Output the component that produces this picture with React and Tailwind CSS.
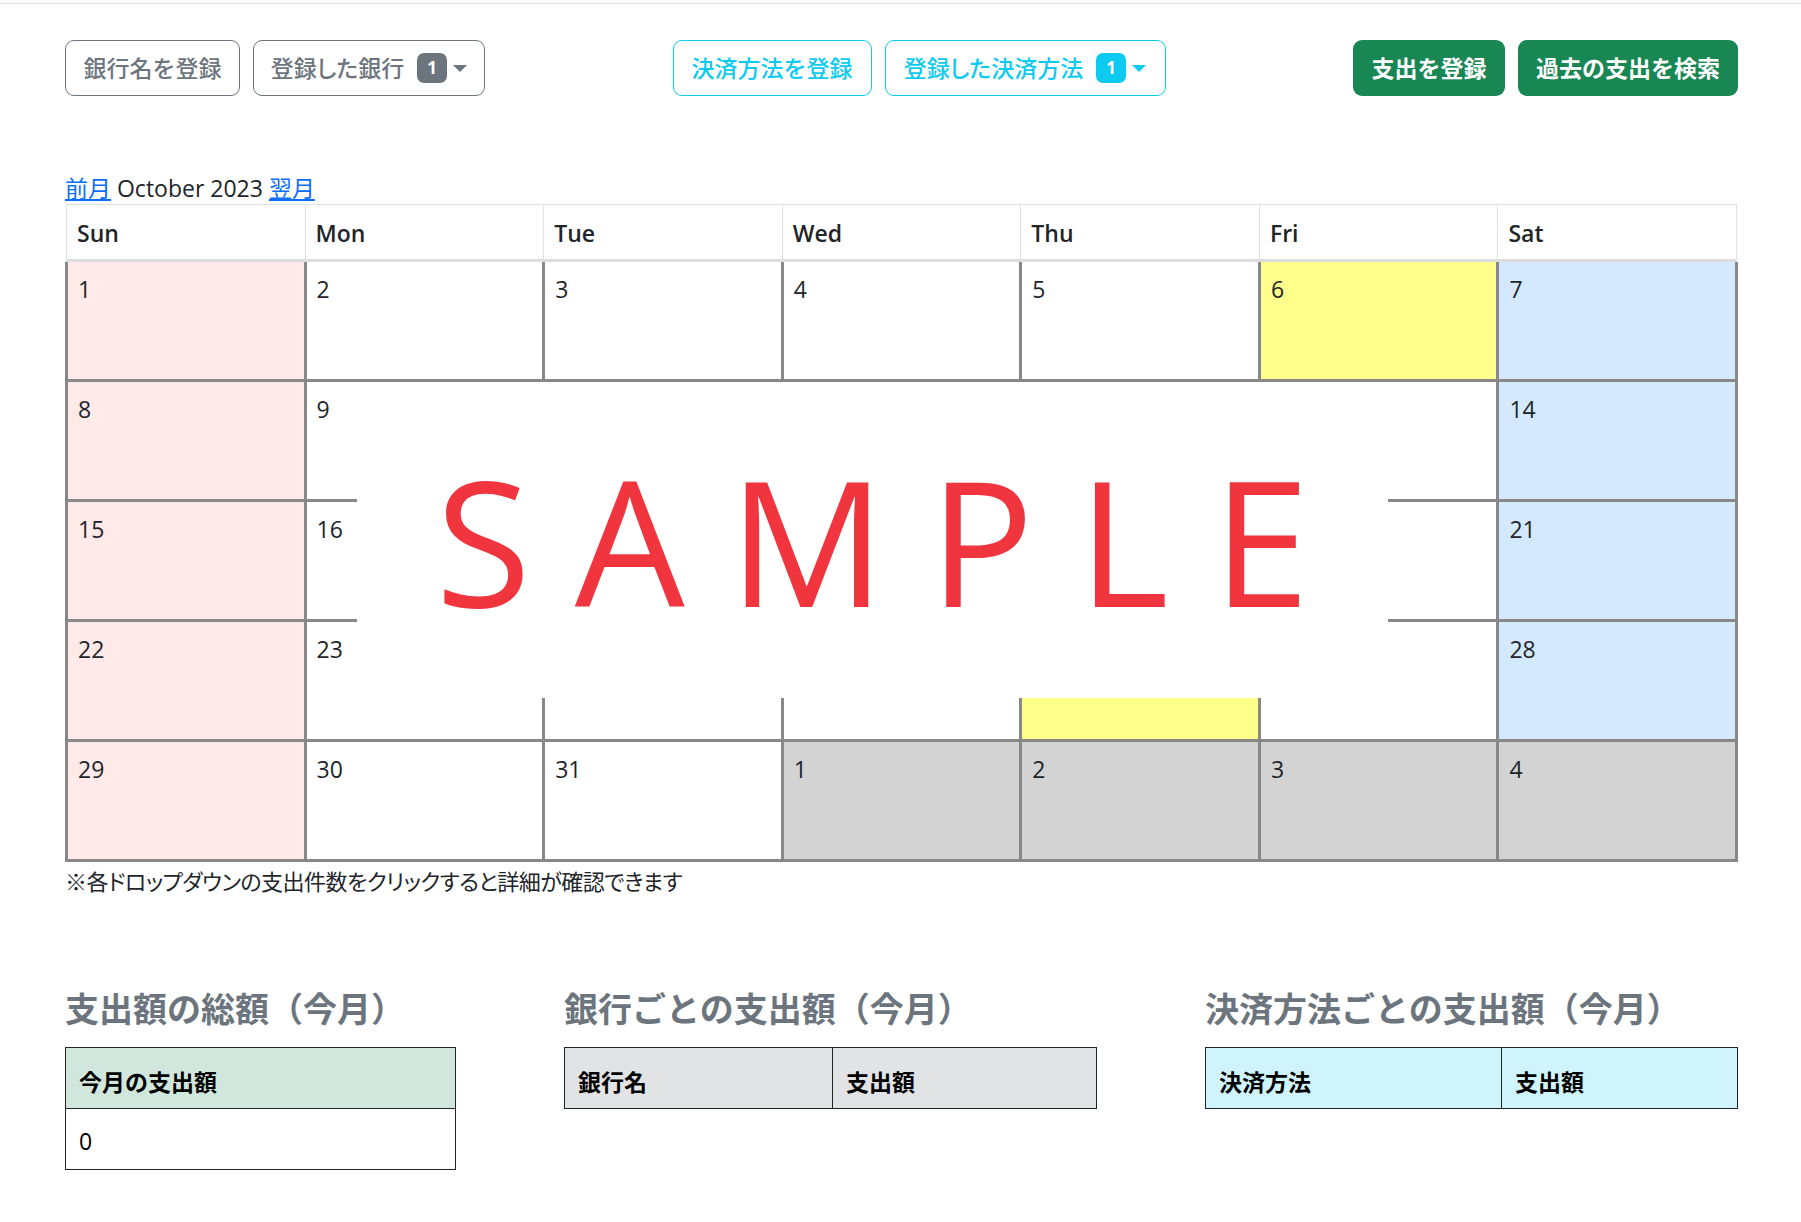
import React from 'react';

const days = ['Sun', 'Mon', 'Tue', 'Wed', 'Thu', 'Fri', 'Sat'];

// October 2023, last row spills into November
const weeks = [
    [1, 2, 3, 4, 5, 6, 7],
    [8, 9, 10, 11, 12, 13, 14],
    [15, 16, 17, 18, 19, 20, 21],
    [22, 23, 24, 25, 26, 27, 28],
    [29, 30, 31, 1, 2, 3, 4],
];

const highlighted = [6, 26];

const cellBg = (day, col, other) => {
    if (other) return 'bg-[#d3d3d3]';
    if (highlighted.includes(day)) return 'bg-[#ffff8c]';
    if (col === 0) return 'bg-[#ffe9e9]';
    if (col === 6) return 'bg-[#d4e9fd]';
    return 'bg-white';
};

const Caret = () => (
    <span className="ml-[6px] inline-block h-0 w-0 border-x-[7px] border-t-[7px] border-x-transparent border-t-current" />
);

const OutlineButton = ({ children, tone, width }) => (
    <button
        className={`flex h-[56px] items-center justify-center rounded-[9px] border bg-white text-[23px] font-medium ${width} ${
            tone === 'info' ? 'border-[#0dcaf0] text-[#0dcaf0]' : 'border-[#6c757d] text-[#6c757d]'
        }`}
    >
        {children}
    </button>
);

const Badge = ({ tone }) => (
    <span
        className={`ml-[13px] flex h-[30px] w-[30px] items-center justify-center rounded-[7px] text-[17px] font-bold text-white ${
            tone === 'info' ? 'bg-[#0dcaf0]' : 'bg-[#6c757d]'
        }`}
    >
        1
    </span>
);

const GreenButton = ({ children, width }) => (
    <button className={`flex h-[56px] items-center justify-center rounded-[9px] bg-[#198754] text-[23px] font-bold text-white ${width}`}>
        {children}
    </button>
);

const Calendar = () => (
    <div>
        {/* header */}
        <div className="ml-px flex w-[1671px] border-t border-r border-b-[3px] border-[#dee2e6] border-b-[#dddddd]">
            {days.map((d) => (
                <div key={d} className="flex h-[54px] flex-1 basis-0 items-end border-l border-[#dee2e6] px-[10px] pb-[9px] font-semibold leading-[34.5px]">
                    {d}
                </div>
            ))}
        </div>
        {/* body */}
        {weeks.map((week, wi) => (
            <div key={wi} className="flex w-[1673px] border-r-[3px] border-b-[3px] border-[#888888]">
                {week.map((day, ci) => {
                    const other = wi === 4 && day < 10;
                    return (
                        <div
                            key={ci}
                            className={`h-[117px] flex-1 basis-0 border-l-[3px] border-[#888888] pl-[10px] pt-[10px] leading-[34.5px] ${cellBg(day, ci, other)}`}
                        >
                            {day}
                        </div>
                    );
                })}
            </div>
        ))}
    </div>
);

const SummaryTable = ({ headBg, cols, body }) => (
    <div className="border border-[#212529] text-[23px] text-black">
        <div className={`flex h-[60px] ${headBg}`}>
            {cols.map((c, i) => (
                <div key={c.label} className={`flex items-center px-[13px] pt-[8px] font-bold ${c.width} ${i > 0 ? 'border-l border-[#212529]' : ''}`}>
                    {c.label}
                </div>
            ))}
        </div>
        {body && (
            <div className="flex h-[61px] items-center border-t border-[#212529] bg-white px-[13px] pt-[4px]">{body}</div>
        )}
    </div>
);

export default function App() {
    return (
        <div className="relative min-h-[1222px] bg-white font-['Open_Sans','Noto_Sans_CJK_JP',sans-serif] text-[23px] text-[#212529]">
            <div className="h-[4px] border-b border-[#dee2e6]" />

            <div className="ml-[65px] w-[1673px]">
                {/* action buttons */}
                <div className="mt-[36px] flex justify-between">
                    <div className="flex gap-[13px]">
                        <OutlineButton width="w-[175px]">銀行名を登録</OutlineButton>
                        <OutlineButton width="w-[232px]">
                            <span className="[font-feature-settings:'palt']">登録した銀行</span>
                            <Badge />
                            <Caret />
                        </OutlineButton>
                    </div>
                    <div className="flex gap-[13px]">
                        <OutlineButton tone="info" width="w-[199px]">決済方法を登録</OutlineButton>
                        <OutlineButton tone="info" width="w-[281px]">
                            <span className="[font-feature-settings:'palt']">登録した決済方法</span>
                            <Badge tone="info" />
                            <Caret />
                        </OutlineButton>
                    </div>
                    <div className="flex gap-[13px]">
                        <GreenButton width="w-[152px]">支出を登録</GreenButton>
                        <GreenButton width="w-[220px]">過去の支出を検索</GreenButton>
                    </div>
                </div>

                {/* month navigation */}
                <div className="mt-[76px] leading-[32px]">
                    <a href="#" className="text-[#0d6efd] underline">前月</a> October 2023{' '}
                    <a href="#" className="text-[#0d6efd] underline">翌月</a>
                </div>

                <Calendar />

                <p className="mt-[2px] text-[22px] leading-[34px] tracking-[-0.5px] [font-feature-settings:'palt']">
                    ※各ドロップダウンの支出件数をクリックすると詳細が確認できます
                </p>

                {/* monthly summaries */}
                <div className="mt-[91px] flex justify-between">
                    <div className="w-[391px]">
                        <h3 className="mb-[18px] text-[34px] font-bold leading-[40px] text-[#6c757d]">支出額の総額（今月）</h3>
                        <SummaryTable headBg="bg-[#d1e7dd]" cols={[{ label: '今月の支出額', width: 'flex-1' }]} body="0" />
                    </div>
                    <div className="w-[533px]">
                        <h3 className="mb-[18px] text-[34px] font-bold leading-[40px] text-[#6c757d]">銀行ごとの支出額（今月）</h3>
                        <SummaryTable
                            headBg="bg-[#e2e3e5]"
                            cols={[
                                { label: '銀行名', width: 'w-[267px]' },
                                { label: '支出額', width: 'flex-1' },
                            ]}
                        />
                    </div>
                    <div className="w-[533px]">
                        <h3 className="mb-[18px] text-[34px] font-bold leading-[40px] text-[#6c757d]">決済方法ごとの支出額（今月）</h3>
                        <SummaryTable
                            headBg="bg-[#cff4fc]"
                            cols={[
                                { label: '決済方法', width: 'w-[295px]' },
                                { label: '支出額', width: 'flex-1' },
                            ]}
                        />
                    </div>
                </div>
            </div>

            {/* sample watermark */}
            <div className="absolute left-[357px] top-[382px] flex h-[316px] w-[1031px] items-center justify-center bg-white">
                <span className="pl-[44px] font-['Open_Sans',sans-serif] text-[174px] font-normal leading-none tracking-[44px] text-[#f0353f]">
                    SAMPLE
                </span>
            </div>
        </div>
    );
}
